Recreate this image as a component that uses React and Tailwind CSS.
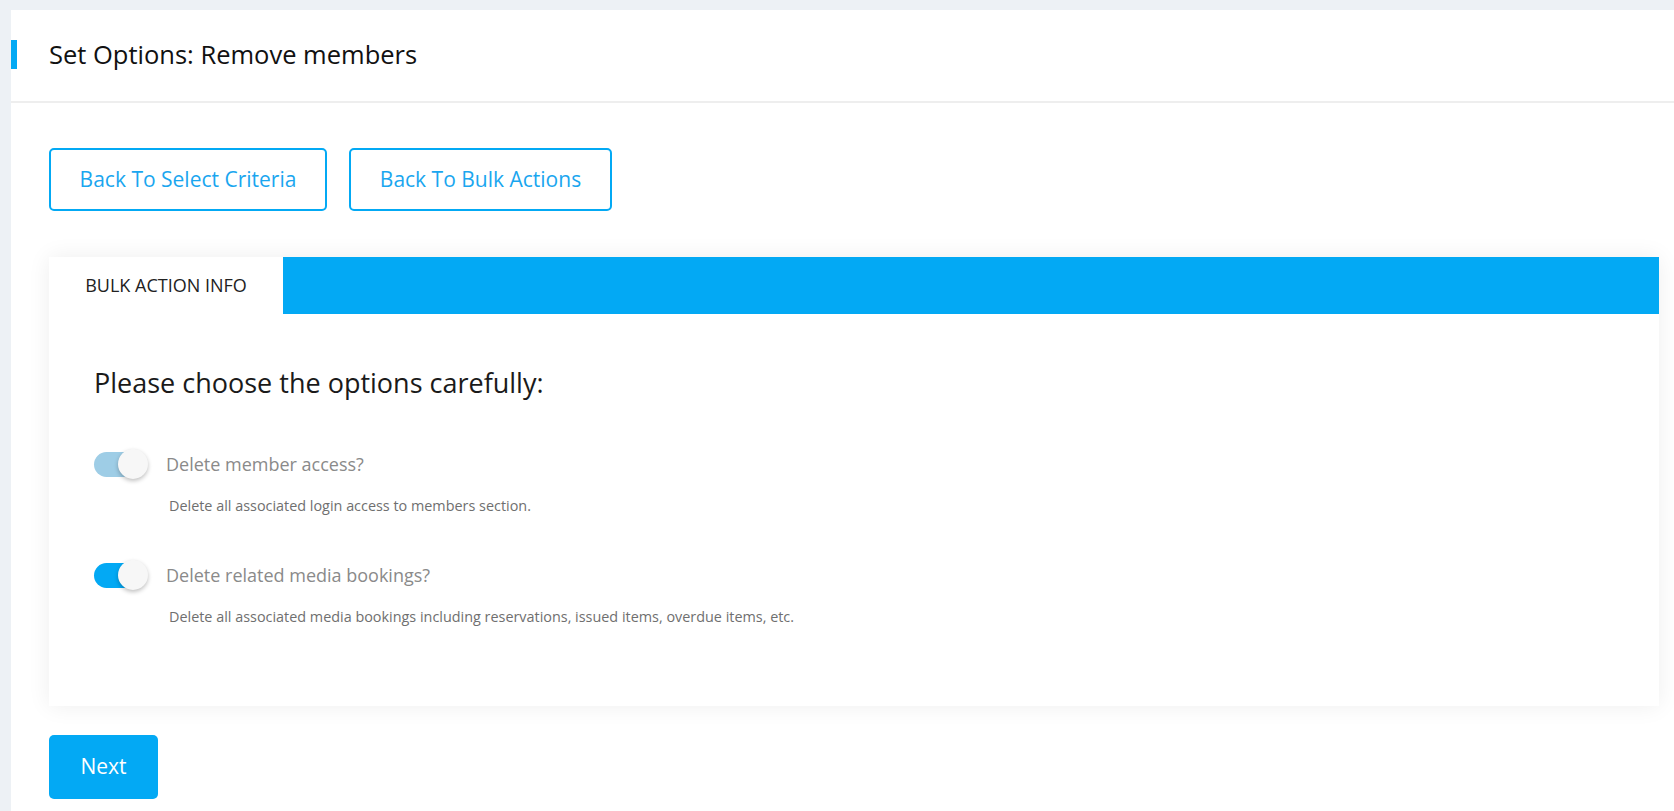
import React from 'react'

const Toggle = ({ on }) => (
  <div className='relative w-[54px] h-[32px] flex items-center shrink-0'>
    <div className={`w-[53px] h-[25px] rounded-full ${on ? 'bg-[#03a9f4]' : 'bg-[#9ecde6]'}`}></div>
    <div className='absolute right-0 top-[1px] w-[30px] h-[30px] rounded-full bg-[#f7f7f7] shadow-[0_2px_4px_rgba(0,0,0,0.25)]'></div>
  </div>
)

const Option = ({ on, label, desc, className }) => (
  <div className={className}>
    <div className='flex items-center gap-[18px]'>
      <Toggle on={on} />
      <span className='text-[18px] leading-[24px] text-[#8a8a8a]'>{label}</span>
    </div>
    <p className='ml-[75px] mt-[16px] text-[14.4px] leading-[20px] text-[#6f6f6f]'>{desc}</p>
  </div>
)

const App = () => {
  return (
    <div className='min-h-screen bg-[#edf1f5] pt-[10px] pl-[11px]' style={{ fontFamily: '"Open Sans", "Noto Sans", sans-serif' }}>
      <div className='bg-white min-h-[801px]'>
        {/* header */}
        <div className='h-[93px] pb-[2px] border-b-2 border-[#eeeeee] flex items-center'>
          <div className='w-[6px] h-[29px] bg-[#03a9f4]'></div>
          <h1 className='ml-[32px] text-[25.5px] text-[#111111]'>Set Options: Remove members</h1>
        </div>

        <div className='pl-[38px] pr-[15px] pt-[45px]'>
          {/* back buttons */}
          <div className='flex gap-[22px]'>
            <button className='w-[278px] h-[63px] border-2 border-[#03a9f4] rounded-[5px] text-[21px] text-[#1aa6ef] bg-white'>Back To Select Criteria</button>
            <button className='w-[263px] h-[63px] border-2 border-[#03a9f4] rounded-[5px] text-[21px] text-[#1aa6ef] bg-white'>Back To Bulk Actions</button>
          </div>

          {/* card */}
          <div className='mt-[46px] bg-white shadow-[0_0_22px_rgba(0,0,0,0.07)]'>
            <div className='h-[57px] bg-[#03a9f4] flex'>
              <div className='w-[234px] bg-white flex items-center justify-center text-[18px] text-[#222222]'>BULK ACTION INFO</div>
            </div>
            <div className='pl-[45px] pt-[50px] pb-[79px]'>
              <h2 className='text-[27px] leading-[37px] text-[#1a1a1a]'>Please choose the options carefully:</h2>
              <Option
                className='mt-[47px]'
                on={false}
                label='Delete member access?'
                desc='Delete all associated login access to members section.'
              />
              <Option
                className='mt-[43px]'
                on={true}
                label='Delete related media bookings?'
                desc='Delete all associated media bookings including reservations, issued items, overdue items, etc.'
              />
            </div>
          </div>

          <button className='mt-[29px] w-[109px] h-[64px] rounded-[5px] bg-[#03a9f4] text-white text-[21px]'>Next</button>
        </div>
      </div>
    </div>
  )
}

export default App
